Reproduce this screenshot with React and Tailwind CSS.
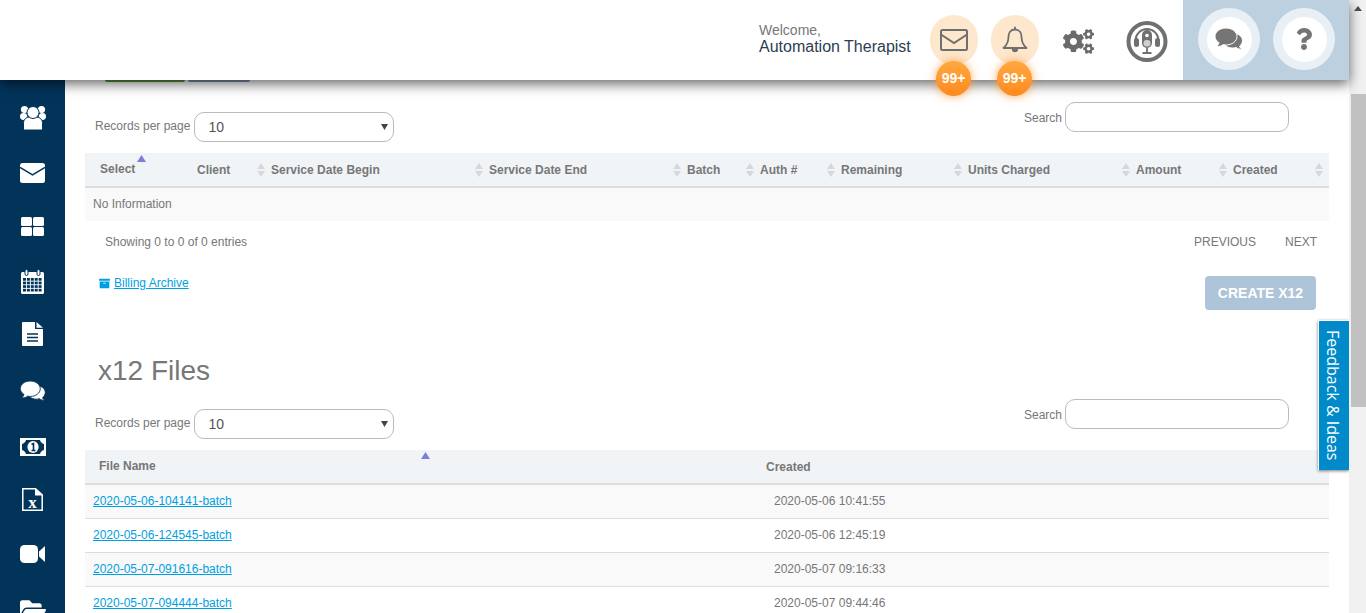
import React from "react";
import { FaFolderOpen, FaCogs, FaQuestion, FaArchive } from "react-icons/fa";

const NAVY = "#02345a";

function UsersIcon() {
  return (
    <svg width="26" height="26" viewBox="0 0 26 26">
      <circle cx="4.5" cy="5.5" r="3.6" fill="#fff" />
      <circle cx="21.5" cy="5.5" r="3.6" fill="#fff" />
      <ellipse cx="3.6" cy="12.5" rx="3.6" ry="3.4" fill="#fff" />
      <ellipse cx="22.4" cy="12.5" rx="3.6" ry="3.4" fill="#fff" />
      <path d="M3.5 26V18.5A6 6 0 0 1 9.5 13h7a6 6 0 0 1 6 5.5V26z" fill="#fff" stroke={NAVY} strokeWidth="1" />
      <circle cx="13" cy="8.5" r="6" fill="#fff" stroke={NAVY} strokeWidth="1" />
    </svg>
  );
}

function EnvelopeIcon() {
  return (
    <svg width="25" height="20" viewBox="0 0 25 20">
      <rect width="25" height="20" rx="2.5" fill="#fff" />
      <path d="M0 4.5 12.5 12 25 4.5" fill="none" stroke={NAVY} strokeWidth="1.5" />
    </svg>
  );
}

function GridIcon() {
  return (
    <svg width="23" height="19" viewBox="0 0 23 19" fill="#fff">
      <rect width="11" height="9" rx="1.5" />
      <rect x="12" width="11" height="9" rx="1.5" />
      <rect y="10" width="11" height="9" rx="1.5" />
      <rect x="12" y="10" width="11" height="9" rx="1.5" />
    </svg>
  );
}

function CalendarIcon() {
  const cells = [];
  for (let row = 0; row < 4; row++) {
    for (let col = 0; col < 5; col++) {
      cells.push(<rect key={`${row}-${col}`} x={2 + col * 3.9} y={9 + row * 3.6} width="3" height="2.7" fill={NAVY} />);
    }
  }
  return (
    <svg width="23" height="25" viewBox="0 0 23 25">
      <rect y="3" width="23" height="22" rx="1.5" fill="#fff" />
      {cells}
      <rect x="4" y="0.5" width="3" height="6" rx="1.5" fill="#fff" stroke={NAVY} strokeWidth="1" />
      <rect x="16" y="0.5" width="3" height="6" rx="1.5" fill="#fff" stroke={NAVY} strokeWidth="1" />
    </svg>
  );
}

function FileIcon() {
  return (
    <svg width="21" height="24" viewBox="0 0 21 24">
      <path d="M0 1a1 1 0 0 1 1-1h12v7h8v16a1 1 0 0 1-1 1H1a1 1 0 0 1-1-1z" fill="#fff" />
      <path d="M14.5 0 21 5.8h-6.5z" fill="#fff" />
      <path d="M5 12h11M5 15.5h11M5 19h11" stroke={NAVY} strokeWidth="1.4" />
    </svg>
  );
}

function CommentsIcon({ width, height, fill, gap }) {
  return (
    <svg width={width} height={height} viewBox="0 0 28 22">
      <path d="M27 21c-1.5.5-4.5-.2-6-1.600-1 .4-2 .6-3.500.6-5.500 0-9.500-3.500-9.500-7.500S12 5 17.500 5 27.500 8.500 27.500 12.500c0 2.500-1.300 4.500-3 5.800.4 1.200 1.400 2.200 2.500 2.700z" fill={fill} stroke={gap} strokeWidth="1" />
      <path d="M1.500 18.500c1.300-.9 2.300-2.300 2.500-3.800C1.600 13.200 0 10.900 0 8.500 0 3.800 4.900 0 11 0s11 3.800 11 8.500S17.100 17 11 17c-1 0-2-.1-3-.3-1.700 1.400-4 2.100-6.500 1.800z" fill={fill} stroke={gap} strokeWidth="1" />
    </svg>
  );
}

function MoneyIcon() {
  return (
    <svg width="26" height="18" viewBox="0 0 26 18">
      <rect width="26" height="18" fill="#fff" />
      <path d="M6 2h14c.5 2 2 3.500 4 4v6c-2 .5-3.500 2-4 4H6c-.5-2-2-3.500-4-4V6c2-.5 3.500-2 4-4z" fill={NAVY} />
      <ellipse cx="13" cy="9" rx="5.600" ry="6" fill="#fff" />
      <path d="M11.500 6.500 13.500 5.500V12M11.500 12.500h4" fill="none" stroke={NAVY} strokeWidth="1.600" />
    </svg>
  );
}

function XFileIcon() {
  return (
    <svg width="21" height="23" viewBox="0 0 21 23">
      <path d="M.8.8h12.700l6.700 6v15.400H.8z" fill="none" stroke="#fff" strokeWidth="1.500" />
      <path d="M13 .8v6.700h7.500z" fill="#fff" />
      <text x="10.500" y="19.500" textAnchor="middle" fontSize="17" fontWeight="700" fill="#fff" fontFamily="'Liberation Serif', serif">
        x
      </text>
    </svg>
  );
}

function VideoIcon() {
  return (
    <svg width="25" height="18" viewBox="0 0 25 18" fill="#fff">
      <rect width="18" height="18" rx="4.500" />
      <path d="M19 6.500 25 1v16l-6-5.500z" />
    </svg>
  );
}

const sideIcons = [
  { icon: <UsersIcon /> },
  { icon: <EnvelopeIcon />, nudge: "pt-[2px]" },
  { icon: <GridIcon /> },
  { icon: <CalendarIcon /> },
  { icon: <FileIcon />, nudge: "pb-[3px]" },
  { icon: <CommentsIcon width={26} height={20} fill="#fff" gap={NAVY} />, nudge: "pt-[2px]" },
  { icon: <MoneyIcon />, nudge: "pt-[4px]" },
  { icon: <XFileIcon /> },
  { icon: <VideoIcon /> },
  { icon: <FaFolderOpen size={26} /> },
];

const columns = [
  { label: "Select", width: "w-[112px]", sort: false, extra: "pl-[15px] pb-[2px]" },
  { label: "Client", width: "w-[74px]", sort: true },
  { label: "Service Date Begin", width: "w-[218px]", sort: true },
  { label: "Service Date End", width: "w-[198px]", sort: true },
  { label: "Batch", width: "w-[73px]", sort: true },
  { label: "Auth #", width: "w-[81px]", sort: true },
  { label: "Remaining", width: "w-[127px]", sort: true },
  { label: "Units Charged", width: "w-[168px]", sort: true },
  { label: "Amount", width: "w-[97px]", sort: true },
  { label: "Created", width: "w-[96px]", sort: true },
];

const files = [
  { name: "2020-05-06-104141-batch", created: "2020-05-06 10:41:55" },
  { name: "2020-05-06-124545-batch", created: "2020-05-06 12:45:19" },
  { name: "2020-05-07-091616-batch", created: "2020-05-07 09:16:33" },
  { name: "2020-05-07-094444-batch", created: "2020-05-07 09:44:46" },
];

function SortIcon() {
  return (
    <svg width="8" height="14" viewBox="0 0 8 14" className="shrink-0">
      <path d="M4 0 8 6H0z" fill="#d5d8dc" />
      <path d="M4 14 0 8h8z" fill="#d5d8dc" />
    </svg>
  );
}

function SortUp({ className }) {
  return (
    <svg width="9" height="7" viewBox="0 0 9 7" className={className}>
      <path d="M4.500 0 9 7H0z" fill="#7a80d8" />
    </svg>
  );
}

function PodcastIcon() {
  return (
    <svg width="42" height="41" viewBox="0 0 42 41">
      <circle cx="21" cy="20.500" r="18.500" fill="#fff" stroke="#707070" strokeWidth="4" />
      <path d="M9.500 23v-3.500a11.500 11.500 0 0 1 23 0V23" fill="none" stroke="#707070" strokeWidth="2" />
      <rect x="8" y="17" width="5" height="9" rx="2.500" fill="#707070" />
      <rect x="29" y="17" width="5" height="9" rx="2.500" fill="#707070" />
      <rect x="16" y="9" width="10" height="18" rx="5" fill="#707070" />
      <circle cx="21" cy="14.500" r="1.800" fill="#fff" />
      <rect x="17.500" y="19" width="7" height="6.500" rx="3" fill="#cfcfcf" />
      <path d="M21 27v4M16.500 32h9" stroke="#707070" strokeWidth="1.800" />
    </svg>
  );
}

function MailIcon() {
  return (
    <svg width="28" height="22" viewBox="0 0 28 22" fill="none" stroke="#6f6f6f" strokeWidth="2">
      <rect x="1" y="1" width="26" height="20" rx="1.500" />
      <path d="M1 5.500 14 14 27 5.500" />
    </svg>
  );
}

function BellIcon() {
  return (
    <svg width="26" height="28" viewBox="0 0 26 28" fill="none" stroke="#6f6f6f" strokeWidth="1.800">
      <path d="M13 3.500c-4.200 0-6.500 3-6.500 7 0 6.500-2 9-5 11.500h23c-3-2.500-5-5-5-11.500 0-4-2.300-7-6.500-7z" strokeLinejoin="round" />
      <path d="M13 .8v2.700" />
      <path d="M9.800 23a3.200 3.200 0 0 0 6.400 0z" fill="#6f6f6f" stroke="none" />
    </svg>
  );
}

function Badge() {
  return (
    <span className="absolute left-[6px] top-[46px] flex h-[35px] w-[35px] items-center justify-center rounded-full bg-gradient-to-b from-[#ffa83f] to-[#fd8a1c] text-[14px] font-bold text-white shadow-[0_0_10px_rgba(253,150,50,0.8)]">
      99+
    </span>
  );
}

function HelpButton({ children }) {
  return (
    <div className="flex h-[62px] w-[62px] items-center justify-center rounded-full bg-[#e9f0f5]">
      <div className="flex h-[45px] w-[45px] items-center justify-center rounded-full bg-white text-[#757575]">
        {children}
      </div>
    </div>
  );
}

function Controls({ className }) {
  return (
    <div className={`flex justify-between pl-[30px] pr-[60px] ${className}`}>
      <div className="mt-[10px] flex items-center gap-[4px]">
        <span className="-mt-[2px] text-[12px] text-[#777]">Records per page</span>
        <div className="relative">
          <select className="block h-[30px] w-[200px] appearance-none rounded-[10px] border border-[#bbb] bg-white pl-[13px] text-[14px] text-[#555]">
            <option>10</option>
          </select>
          <svg width="7" height="6" viewBox="0 0 7 6" className="absolute right-[6px] top-[12px]">
            <path d="M0 0h7L3.500 6z" fill="#444" />
          </svg>
        </div>
      </div>
      <div className="flex h-[30px] items-center gap-[3px]">
        <span className="mt-[1px] text-[12px] text-[#777]">Search</span>
        <input className="h-[30px] w-[224px] rounded-[10px] border border-[#bbb] bg-white" />
      </div>
    </div>
  );
}

export default function App() {
  return (
    <div className="relative flex h-[613px] w-full overflow-hidden bg-white font-['Liberation_Sans',Arial,sans-serif]">
      <div className="flex min-w-0 flex-1 flex-col">
        {/* top bar */}
        <header className="relative z-20 flex h-[80px] shrink-0 items-stretch justify-end bg-white shadow-[0_4px_12px_rgba(0,0,0,0.6)]">
          <div className="mt-[22px] mr-[18px] w-[153px] whitespace-nowrap">
            <div className="text-[14px] leading-[16px] text-[#777]">Welcome,</div>
            <div className="text-[16px] leading-[18px] text-[#2c3e50]">Automation Therapist</div>
          </div>
          <div className="relative mt-[15px] mr-[13px] flex h-[50px] w-[48px] items-center justify-center rounded-full bg-[#fde8ce]">
            <MailIcon />
            <Badge />
          </div>
          <div className="relative mt-[15px] mr-[24px] flex h-[50px] w-[48px] items-center justify-center rounded-full bg-[#fde8ce]">
            <BellIcon />
            <Badge />
          </div>
          <div className="mt-[26px] mr-[32px] h-[28px] text-[#6b6b6b]">
            <FaCogs size={31} />
          </div>
          <div className="mt-[21px] mr-[15px]">
            <PodcastIcon />
          </div>
          <div className="flex w-[166px] items-start gap-[13px] bg-[#bcd0e0] pt-[8px] pl-[15px]">
            <HelpButton>
              <CommentsIcon width={28} height={22} fill="#757575" gap="#fff" />
            </HelpButton>
            <HelpButton>
              <FaQuestion size={22} />
            </HelpButton>
          </div>
        </header>

        <div className="flex min-h-0 flex-1">
          {/* side nav */}
          <nav className="flex w-[65px] shrink-0 flex-col items-center bg-[#02345a] pt-[10px] text-white">
            {sideIcons.map(({ icon, nudge }, i) => (
              <div key={i} className={`flex h-[54.6px] shrink-0 items-center justify-center ${nudge || ""}`}>
                {icon}
              </div>
            ))}
          </nav>

          <main className="relative min-w-0 flex-1 overflow-hidden">
            <div className="ml-[40px] flex gap-[3px]">
              <div className="h-[2px] w-[80px] rounded-b-[2px] bg-[#5a9a32]" />
              <div className="h-[2px] w-[62px] rounded-b-[2px] bg-[#8296b3]" />
            </div>

            <Controls className="mt-[20px]" />

            <div className="mx-[20px] mt-[11px]">
              <div className="relative flex h-[35px] items-center border-b-2 border-[#ddd] bg-[#f0f4f7] text-[12px] font-bold text-[#777]">
                {columns.map((col) => (
                  <div
                    key={col.label}
                    className={`flex shrink-0 items-center justify-between pr-[6px] ${col.width} ${col.extra || ""}`}
                  >
                    <span>{col.label}</span>
                    {col.sort && <SortIcon />}
                  </div>
                ))}
                <SortUp className="absolute left-[52px] top-[2px]" />
              </div>
              <div className="flex h-[33px] items-center bg-[#f9f9f9] pb-[2px] pl-[8px] text-[12px] text-[#777]">
                No Information
              </div>
            </div>

            <div className="mx-[20px] mt-[12px] flex items-center justify-between pl-[20px] pr-[12px] text-[12px] text-[#777]">
              <span>Showing 0 to 0 of 0 entries</span>
              <div className="flex gap-[29px]">
                <span>PREVIOUS</span>
                <span>NEXT</span>
              </div>
            </div>

            <div className="mx-[20px] mt-[25px] flex items-start justify-between pl-[14px] pr-[13px]">
              <a href="#" className="-mt-[2px] flex items-center gap-[4px] text-[12px] text-[#009fe3] underline">
                <FaArchive size={11} />
                <span>Billing Archive</span>
              </a>
              <button className="h-[34px] w-[111px] rounded-[4px] bg-[#aec4d9] text-[14px] font-bold text-white">
                CREATE X12
              </button>
            </div>

            <h2 className="mt-[44px] pl-[33px] text-[28px] leading-[34px] text-[#777]">x12 Files</h2>

            <Controls className="mt-[11px]" />

            <div className="mx-[20px] mt-[11px]">
              <div className="relative flex h-[35px] items-center border-b-2 border-[#ddd] bg-[#f0f4f7] text-[12px] font-bold text-[#777]">
                <div className="-mt-[2px] w-[681px] pl-[14px]">File Name</div>
                <div>Created</div>
                <SortUp className="absolute left-[336px] top-[2px]" />
              </div>
              {files.map((file, i) => (
                <div
                  key={file.name}
                  className={`flex h-[34px] items-center border-b border-[#ddd] pb-[1px] text-[12px] ${i % 2 === 0 ? "bg-[#f9f9f9]" : "bg-white"}`}
                >
                  <div className="w-[689px] pl-[8px]">
                    <a href="#" className="text-[#009fe3] underline">
                      {file.name}
                    </a>
                  </div>
                  <div className="text-[#777]">{file.created}</div>
                </div>
              ))}
            </div>

            {/* feedback tab */}
            <div className="absolute right-0 top-[240px] flex h-[150px] w-[31px] items-center justify-center border-l border-t border-white bg-[#008ac9] pr-[3px] font-['Open_Sans',sans-serif] text-[16px] text-white shadow-[0_1px_3px_rgba(0,0,0,0.5)] [writing-mode:vertical-rl]">
              Feedback &amp; Ideas
            </div>
          </main>
        </div>
      </div>

      {/* scrollbar */}
      <div className="flex w-[17px] shrink-0 flex-col items-center bg-[#f1f1f1]">
        <svg width="8" height="5" viewBox="0 0 8 5" className="mt-[6px]">
          <path d="M4 0 8 5H0z" fill="#505050" />
        </svg>
        <div className="mt-[83px] h-[313px] w-[15px] self-end bg-[#c1c1c1]" />
      </div>
    </div>
  );
}
